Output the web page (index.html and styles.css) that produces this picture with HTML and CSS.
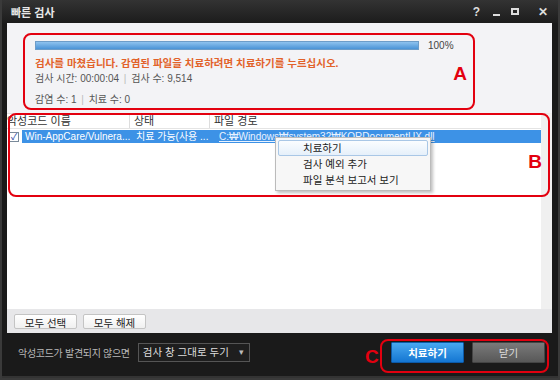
FILE: index.html
```html
<!DOCTYPE html>
<html>

<head>
    <title>빠른 검사</title>
    <meta charset="utf-8">
    <link rel="stylesheet" href="styles.css">
</head>

<body>
    <div class="vindue">
        <header class="titel">
            <span class="navn">빠른 검사</span>
            <span class="knapper">
                <span class="hjaelp">?</span>
                <span class="mini"></span>
                <span class="maks"></span>
                <span class="luk">✕</span>
            </span>
        </header>

        <main class="indhold">
            <section class="resume">
                <div class="fremskridt">
                    <div class="bar"><div class="fyld"></div></div>
                    <span class="pct">100%</span>
                </div>
                <p class="besked">검사를 마쳤습니다. 감염된 파일을 치료하려면 치료하기를 누르십시오.</p>
                <p class="info">검사 시간: 00:00:04 <span class="skil">|</span> 검사 수: 9,514</p>
                <p class="info sidst">감염 수: 1 <span class="skil">|</span> 치료 수: 0</p>
            </section>

            <section class="liste">
                <div class="hoved">
                    <span class="kol navnkol">악성코드 이름</span>
                    <span class="kol status">상태</span>
                    <span class="kol sti">파일 경로</span>
                </div>
                <div class="raekke">
                    <span class="boks">✓</span>
                    <span class="kol navnkol">Win-AppCare/Vulnera...</span>
                    <span class="kol status">치료 가능(사용 ...</span>
                    <span class="kol sti"><u>C:₩Windows₩system32₩KORDocumentUX.dll</u></span>
                </div>

                <ul class="menu">
                    <li class="aktiv">치료하기</li>
                    <li>검사 예외 추가</li>
                    <li>파일 분석 보고서 보기</li>
                </ul>
            </section>

            <section class="handling">
                <button class="lys">모두 선택</button>
                <button class="lys">모두 해제</button>
            </section>
        </main>

        <footer class="bund">
            <span class="tekst">악성코드가 발견되지 않으면</span>
            <span class="vaelg">검사 창 그대로 두기 <i>▾</i></span>
            <span class="fyldop"></span>
            <button class="bla">치료하기</button>
            <button class="graa">닫기</button>
        </footer>

        <div class="mark mark-a"><b>A</b></div>
        <div class="mark mark-b"><b>B</b></div>
        <div class="mark mark-c"><b>C</b></div>
    </div>
</body>

</html>
```

FILE: styles.css
```css
* {
    box-sizing: border-box;
}

body {
    margin: 0;
    background: #0e0e0e;
    font-family: "Liberation Sans", "Noto Sans CJK KR", sans-serif;
    font-size: 11px;
}

.vindue {
    position: relative;
    width: 560px;
    height: 380px;
    background: #1a1a1a;
    border: 2px solid #3a3a3a;
    border-top: none;
    display: flex;
    flex-direction: column;
}

.titel {
    height: 23px;
    display: flex;
    align-items: center;
    justify-content: space-between;
    padding: 0 10px 0 9px;
    background: linear-gradient(#333, #1c1c1c);
    color: #e8e8e8;
}

.navn {
    font-size: 11px;
    font-weight: bold;
}

.knapper {
    display: flex;
    align-items: center;
    gap: 11px;
    color: #ddd;
    font-weight: bold;
}

.hjaelp {
    font-size: 12px;
    margin-right: 2px;
}

.mini {
    width: 7px;
    height: 2px;
    margin-top: 6px;
    background: #ddd;
}

.maks {
    width: 8px;
    height: 7px;
    border: 2px solid #ddd;
    margin-right: 8px;
}

.luk {
    font-size: 12px;
}

.indhold {
    margin: 0 6px 0 5px;
    display: flex;
    flex-direction: column;
}

.resume {
    height: 90px;
    background: #f3f3f6;
    padding: 17px 0 0 28px;
}

.fremskridt {
    display: flex;
    align-items: center;
    gap: 9px;
    height: 10px;
}

.bar {
    width: 384px;
    height: 9px;
    border: 1px solid #6d9cc8;
    background: #dde6ef;
}

.fyld {
    height: 100%;
    background: linear-gradient(#8ec2ee, #4b93d6);
}

.pct {
    font-size: 10px;
    color: #444;
}

.resume p {
    margin: 0;
    line-height: 12px;
}

.resume .besked {
    margin-top: 7px;
    color: #e2622a;
    font-weight: bold;
    font-size: 10.5px;
}

.resume .info {
    margin-top: 4px;
    color: #555;
    font-size: 10px;
}

.resume .info.sidst {
    margin-top: 9px;
}

.skil {
    color: #bbb;
    margin: 0 2px;
}

.liste {
    position: relative;
    height: 196px;
    background: #fff;
    border-top: 1px solid #e2e2e2;
    border-right: 11px solid #f0f0f0;
}

.hoved {
    display: flex;
    height: 15px;
    align-items: center;
    border-bottom: 1px solid #e4e4e4;
    color: #333;
}

.kol {
    white-space: nowrap;
    overflow: hidden;
    padding-left: 4px;
}

.hoved .kol {
    border-right: 1px solid #ddd;
    height: 100%;
    line-height: 14px;
}

.navnkol {
    width: 123px;
}

.hoved .navnkol {
    padding-left: 0;
}

.status {
    width: 80px;
}

.sti {
    flex: 1;
}

.hoved .sti {
    border-right: none;
}

.raekke {
    display: flex;
    align-items: center;
    height: 13px;
    margin-top: 1px;
    color: #fff;
    font-size: 10px;
}

.raekke .navnkol {
    width: 110px;
    padding-left: 3px;
}

.raekke .status {
    width: 81px;
}

.raekke .kol,
.raekke .sti {
    background: #3d92e6;
    height: 100%;
    line-height: 13px;
}

.raekke .sti {
    color: #eaf3ff;
    padding-left: 6px;
}

.boks {
    width: 10px;
    height: 10px;
    border: 1px solid #7a8a9a;
    background: #fff;
    color: #1a3c9c;
    font-size: 9px;
    line-height: 8px;
    text-align: center;
    margin: 0 3px 0 2px;
}

.menu {
    position: absolute;
    left: 268px;
    top: 23px;
    width: 156px;
    margin: 0;
    padding: 2px;
    list-style: none;
    background: #f7f7f7;
    border: 1px solid #bbb;
    box-shadow: 2px 2px 3px rgba(0, 0, 0, 0.25);
    color: #222;
    font-size: 10.5px;
}

.menu li {
    height: 16px;
    line-height: 15px;
    padding-left: 24px;
    border: 1px solid transparent;
}

.menu li.aktiv {
    background: linear-gradient(#fbfdff, #e6f0fa);
    border-color: #a9c7e6;
    border-radius: 2px;
}

.handling {
    height: 24px;
    background: #e7e7e9;
    display: flex;
    align-items: center;
    gap: 6px;
    padding-left: 7px;
}

.lys {
    height: 15px;
    width: 63px;
    padding: 0;
    font-family: inherit;
    font-size: 10.5px;
    color: #222;
    background: linear-gradient(#ffffff, #f0f0f0);
    border: 1px solid #c4c4c4;
    border-radius: 2px;
}

.bund {
    flex: 1;
    display: flex;
    align-items: center;
    padding: 0 13px 4px 16px;
    border-bottom: 2px solid #333;
}

.tekst {
    color: #b9b9b9;
    margin-right: 8px;
    font-size: 10px;
    letter-spacing: -0.3px;
}

.vaelg {
    width: 112px;
    height: 19px;
    border: 1px solid #555;
    background: #1e1e1e;
    color: #ddd;
    line-height: 17px;
    padding-left: 4px;
    display: flex;
    justify-content: space-between;
    padding-right: 5px;
    font-size: 10.5px;
}

.vaelg i {
    font-style: normal;
    font-size: 9px;
    color: #bbb;
}

.fyldop {
    flex: 1;
}

.bla,
.graa {
    width: 73px;
    height: 21px;
    font-family: inherit;
    font-size: 10.5px;
    border-radius: 1px;
    padding: 0;
}

.bla {
    background: linear-gradient(#48a8f0, #1476d2);
    border: 1px solid #0c5aa8;
    color: #fff;
    font-weight: bold;
    margin-right: 8px;
}

.graa {
    background: linear-gradient(#7a7a7a, #585858);
    border: 1px solid #444;
    color: #ddd;
}

.mark {
    position: absolute;
    border: 2px solid #e3000f;
    border-radius: 8px;
}

.mark b {
    position: absolute;
    color: #e3000f;
    font-family: "Liberation Sans", sans-serif;
    font-size: 19px;
    font-weight: bold;
}

.mark-a {
    left: 21px;
    top: 33px;
    width: 452px;
    height: 77px;
}

.mark-a b {
    right: 6px;
    top: 28px;
}

.mark-b {
    left: 6px;
    top: 113px;
    width: 542px;
    height: 84px;
}

.mark-b b {
    right: 6px;
    top: 36px;
}

.mark-c {
    left: 378px;
    top: 339px;
    width: 169px;
    height: 34px;
}

.mark-c b {
    left: -17px;
    top: 5px;
}
```
